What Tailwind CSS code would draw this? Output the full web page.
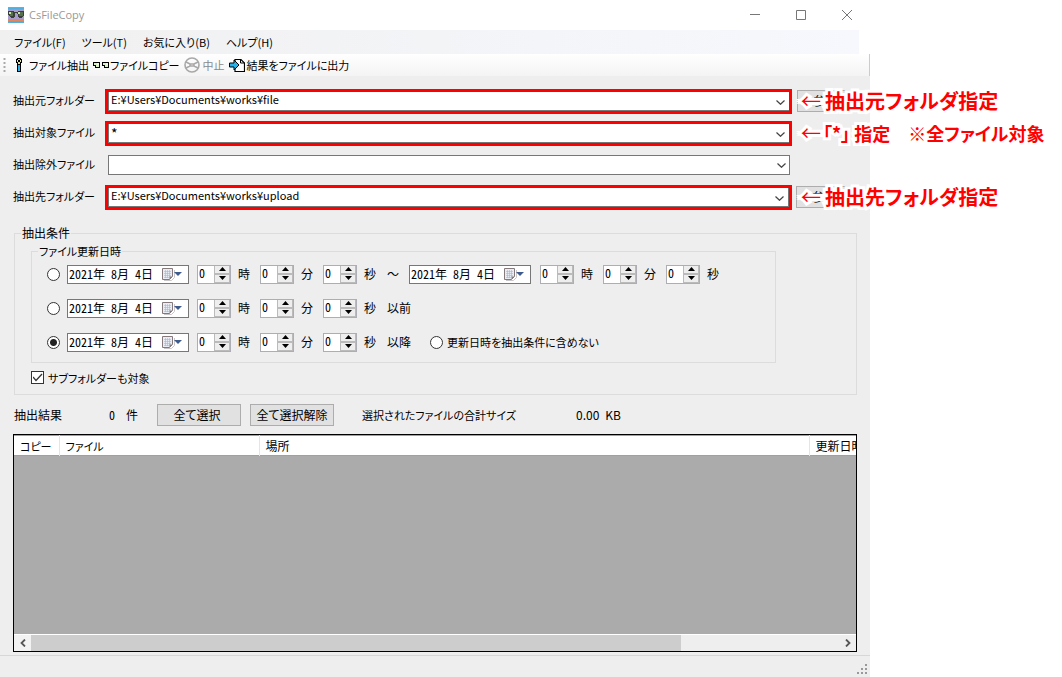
<!DOCTYPE html>
<html lang="ja">
<head>
<meta charset="utf-8">
<title>CsFileCopy</title>
<script src="https://cdn.jsdelivr.net/npm/@tailwindcss/browser@4"></script>
</head>
<body class="min-h-screen flex bg-white text-black text-xs leading-4 font-['Noto_Sans_CJK_JP',sans-serif] [font-feature-settings:'palt']">

<svg class="hidden" aria-hidden="true">
  <symbol id="chev" viewBox="0 0 9 5"><path d="M0.5 0.5L4.500 4.300L8.500 0.500" fill="none" stroke="#444" stroke-width="1.2"/></symbol>
  <symbol id="cal" viewBox="0 0 21 13">
    <path d="M2 12.500H9.500L12.500 9.500V2" fill="none" stroke="#c9c4c5" stroke-width="1"/>
    <path d="M0.500 0.500H10.500V8.500L7.500 11.500H0.500Z" fill="#e9edf5" stroke="#85797b"/>
    <path d="M2 3.500H9M2 5.500H9M2 7.500H9M2 9.500H7M3.500 2V10M5.500 2V10M7.500 2V9" stroke="#a9b3cc" stroke-width=".6"/>
    <path d="M7.500 11.500V8.500H10.500Z" fill="#85797b"/>
    <path d="M12 4H20L16 8Z" fill="#3f5a8c"/>
  </symbol>
  <symbol id="up" viewBox="0 0 7 4"><path d="M3.500 0L7 4H0Z" fill="#000"/></symbol>
  <symbol id="down" viewBox="0 0 7 4"><path d="M3.500 4L7 0H0Z" fill="#000"/></symbol>
</svg>

<div class="flex-1 min-w-0 mr-48 flex flex-col bg-[#eee]">
  <header class="h-[30px] flex items-center bg-white pl-2 pr-[18px]">
    <svg class="w-4 h-4" viewBox="0 0 16 16" shape-rendering="crispEdges">
      <path fill="#4fb0e0" d="M0 0h16v16H0z"/><path fill="#e08a5c" d="M0 0h16v1H0zM0 2h16v1H0zM0 12h16v2H0z"/><path fill="#a99bd0" d="M0 3h16v9H0z"/>
      <path fill="#3a3f3a" d="M0 4h6v1h4V4h6v5h-1v1h-1v1h-3v-1h-1V7H9V6H7v4H6v1H3v-1H2V9H1V8H0z"/><path fill="#c9e8a8" d="M1 5h2v2H1zM10 5h2v2h-2z"/><path fill="#55704f" d="M3 5h2v4H2V7h1zM12 5h3v4h-4V7h1z"/>
    </svg>
    <h1 class="ml-[5px] flex-1 text-[#999] font-['Open_Sans',sans-serif] text-[11px]">CsFileCopy</h1>
    <div class="flex gap-9 text-[#777]">
      <button aria-label="最小化"><svg class="w-[10px] h-[10px]" viewBox="0 0 10 10"><path d="M0 4.500H10" stroke="currentColor"/></svg></button>
      <button aria-label="最大化"><svg class="w-[10px] h-[10px]" viewBox="0 0 10 10"><path d="M.5.5H9.500V9.500H.5Z" fill="none" stroke="currentColor"/></svg></button>
      <button aria-label="閉じる"><svg class="w-[10px] h-[10px]" viewBox="0 0 10 10"><path d="M0 0L10 10M10 0L0 10" stroke="currentColor"/></svg></button>
    </div>
  </header>

  <div class="bg-white">
    <nav class="h-6 mr-[11px] pl-[14px] pb-px flex items-center gap-4 text-[11px] bg-linear-to-r from-[#f0f0f0] to-[#f6f8fd]">
      <button>ファイル(F)</button><button>ツール(T)</button><button>お気に入り(B)</button><button>ヘルプ(H)</button>
    </nav>
  </div>

  <div role="toolbar" class="h-[22px] flex items-center gap-1 pl-[3px] text-[11px] bg-linear-to-b from-white to-[#f4f4f4] border-r border-[#ccc]">
    <svg class="w-[3px] h-[14px]" viewBox="0 0 3 14"><path d="M1.500 0V14" stroke="#aaa" stroke-width="2" stroke-dasharray="2 2"/></svg>
    <button class="flex items-center ml-[5px]"><svg class="w-2 h-4 mr-[6px]" viewBox="0 0 8 16" shape-rendering="crispEdges"><path d="M2 1h4v1h1v4H6v9H2V6H1V2h1z"/><path fill="#dfe6a8" d="M3 2h2v1H3zM2 3h1v2H2zM5 3h1v2H5zM3 5h2v2H3z"/><path fill="#28b0e8" d="M3 8h2v6H3z"/></svg>ファイル抽出</button>
    <button class="flex items-center"><svg class="w-4 h-4 mr-px" viewBox="0 0 16 16" shape-rendering="crispEdges"><path d="M0 5h7v6H2V9H0zM9 5h7v6h-5V9H9z"/><path fill="#d9f2c4" d="M1 6h3v2H1zM3 8h3v2H3zM10 6h3v2h-3zM12 8h3v2h-3z"/><path fill="#eef8e4" d="M4 6h2v2H4zM13 6h2v2h-2z"/></svg>ファイルコピー</button>
    <button disabled class="flex items-center text-[#8a8a8a]"><svg class="w-4 h-4 mr-[3px]" viewBox="0 0 16 16" fill="none" stroke="#a8a8a8" stroke-width="1.600"><circle cx="8" cy="8" r="7"/><path d="M2 5L6 7H10L14 5M2 11L6 9H10L14 11M6 7V9M10 7V9"/></svg>中止</button>
    <button class="flex items-center"><svg class="w-4 h-4 mr-[2px]" viewBox="0 0 16 16"><path d="M6 4V2.500H12L15.500 6V14.500H6V12" fill="#fff" stroke="#000" stroke-width="1.200"/><path d="M11.500 2.500V6H15.500" fill="none" stroke="#000"/><path d="M.5 6H5V3L10 8L5 13V10H.5Z" fill="#28b0e8" stroke="#000"/></svg>結果をファイルに出力</button>
  </div>

  <main class="flex-1 flex flex-col px-[13px] pt-[9px] pb-[3px]">
    <div class="h-8 flex items-center relative">
      <label for="src" class="w-[92px] pb-[2px] text-[11px]">抽出元フォルダー</label>
      <div class="flex-1 mr-[5px] relative border-[3px] border-[#f00] h-[25px] flex">
        <select id="src" class="appearance-none w-full h-[19px] bg-white border-b border-l border-[#777] pl-[2px] pb-1 text-[11px] leading-[14px]"><option>E:¥Users¥Documents¥works¥file</option></select>
        <svg class="absolute right-1 top-[8px] w-[9px] h-[5px] pointer-events-none"><use href="#chev"/></svg>
      </div>
      <button class="w-[60px] h-[22px] pr-1 bg-[#e1e1e1] border border-[#adadad]">参照</button>
      <p class="absolute left-full -ml-[56px] flex items-center whitespace-nowrap text-[#f00] text-xl leading-6 font-bold [-webkit-text-stroke:6px_white] [paint-order:stroke]"><span class="w-6 font-normal">←</span>抽出元フォルダ指定</p>
    </div>
    <div class="h-8 flex items-center relative">
      <label for="inc" class="w-[92px] pb-[2px] text-[11px]">抽出対象ファイル</label>
      <div class="flex-1 mr-[65px] relative border-[3px] border-[#f00] h-[25px] flex">
        <select id="inc" class="appearance-none w-full h-[19px] bg-white border-b border-l border-[#777] pl-[2px] text-sm leading-[18px]"><option>*</option></select>
        <svg class="absolute right-1 top-[8px] w-[9px] h-[5px] pointer-events-none"><use href="#chev"/></svg>
      </div>
      <p class="absolute left-full -ml-[56px] flex items-center whitespace-nowrap text-[#f00] text-lg leading-6 font-bold [-webkit-text-stroke:6px_white] [paint-order:stroke]"><span class="w-[22px] text-xl font-normal">←</span>「*」 指定　※全ファイル対象</p>
    </div>
    <div class="h-8 flex items-center">
      <label for="exc" class="w-[92px] pb-[2px] text-[11px]">抽出除外ファイル</label>
      <div class="flex-1 ml-[3px] mr-[67px] relative flex">
        <select id="exc" class="appearance-none w-full h-5 bg-white border border-[#777] pl-[2px] text-[11px]"><option></option></select>
        <svg class="absolute right-1 top-[8px] w-[9px] h-[5px] pointer-events-none"><use href="#chev"/></svg>
      </div>
    </div>
    <div class="h-8 flex items-center relative">
      <label for="dst" class="w-[92px] pb-[2px] text-[11px]">抽出先フォルダー</label>
      <div class="flex-1 mr-1 relative border-[3px] border-[#f00] h-[25px] flex">
        <select id="dst" class="appearance-none w-full h-[19px] bg-white border-b border-x border-[#777] pl-[2px] pb-1 text-[11px] leading-[14px]"><option>E:¥Users¥Documents¥works¥upload</option></select>
        <svg class="absolute right-[5px] top-[8px] w-[9px] h-[5px] pointer-events-none"><use href="#chev"/></svg>
      </div>
      <button class="w-[60px] h-[22px] mr-px pr-1 bg-[#e1e1e1] border border-[#adadad]">参照</button>
      <p class="absolute left-full -ml-[56px] flex items-center whitespace-nowrap text-[#f00] text-xl leading-6 font-bold [-webkit-text-stroke:6px_white] [paint-order:stroke]"><span class="w-6 font-normal">←</span>抽出先フォルダ指定</p>
    </div>

    <fieldset class="mt-3 ml-px border border-[#dcdcdc] pl-4 pr-20 pb-[2px]">
      <legend class="-ml-[10px] px-px">抽出条件</legend>
      <fieldset class="mt-[2px] border border-[#dcdcdc] pl-[15px] pb-[5px] flex flex-col gap-1">
        <legend class="-ml-[9px] px-px text-[11px]">ファイル更新日時</legend>
        <div id="rowRange" class="h-[30px] flex items-center"></div>
        <div id="rowBefore" class="h-[30px] flex items-center"></div>
        <div id="rowAfter" class="h-[30px] flex items-center"></div>
      </fieldset>
      <div class="h-[29px] flex items-center">
        <input id="sub" type="checkbox" checked class="appearance-none w-[13px] h-[13px] border border-[#333] bg-white">
        <svg class="absolute ml-[2px] w-[10px] h-[9px] pointer-events-none" viewBox="0 0 10 9"><path d="M0 4L3 7.500L9 1" fill="none" stroke="#333" stroke-width="1.300"/></svg>
        <label for="sub" class="ml-1 text-[11px]">サブフォルダーも対象</label>
      </div>
    </fieldset>

    <div class="h-[39px] flex items-center pl-px">
      <span class="w-[95px]">抽出結果</span>
      <span class="w-[17px] [font-feature-settings:'hwid']">0</span>
      <span class="w-[31px]">件</span>
      <button class="w-[84px] h-[22px] mr-[9px] pr-1 bg-[#e1e1e1] border border-[#adadad]">全て選択</button>
      <button class="w-[84px] h-[22px] mr-7 bg-[#e1e1e1] border border-[#adadad]">全て選択解除</button>
      <span class="w-[214px] text-[11px]">選択されたファイルの合計サイズ</span>
      <span>0.00</span><span class="ml-[6px]">KB</span>
    </div>

    <div class="flex-1 flex flex-col border border-black bg-[#ababab] overflow-hidden">
      <div class="flex-1 overflow-hidden">
        <table class="table-fixed w-[996px] border-collapse bg-white">
          <thead><tr class="h-5 border-y border-[#a0a0a0] text-left whitespace-nowrap">
            <th class="w-[45px] pl-[6px] font-normal text-[11px] border-r border-r-[#e5e5e5]">コピー</th>
            <th class="w-[200px] pl-[6px] font-normal text-[11px] border-r border-r-[#e5e5e5]">ファイル</th>
            <th class="w-[550px] pl-[6px] font-normal border-r border-r-[#e5e5e5]">場所</th>
            <th class="pl-[6px] font-normal">更新日時</th>
          </tr></thead>
        </table>
      </div>
      <div class="h-[17px] flex bg-[#eee] border-t border-white">
        <button aria-label="左へ" class="w-[17px] flex items-center justify-center bg-[#f2f2f2]"><svg class="w-[6px] h-[8px]" viewBox="0 0 6 8"><path d="M5 .5L1.500 4L5 7.500" fill="none" stroke="#555" stroke-width="1.800"/></svg></button>
        <div class="flex-1 flex"><div class="bg-[#cdcdcd]" style="width:80.5%"></div></div>
        <button aria-label="右へ" class="w-[17px] flex items-center justify-center"><svg class="w-[6px] h-[8px]" viewBox="0 0 6 8"><path d="M1 .5L4.500 4L1 7.500" fill="none" stroke="#555" stroke-width="1.800"/></svg></button>
      </div>
    </div>
  </main>

  <footer class="h-[22px] border-t border-[#d7d7d7] flex items-end justify-end pb-[3px] pr-[3px]">
    <svg class="w-[10px] h-[10px]" viewBox="0 0 10 10" shape-rendering="crispEdges"><path fill="#999" d="M8 0h2v2H8zM4 4h2v2H4zM8 4h2v2H8zM0 8h2v2H0zM4 8h2v2H4zM8 8h2v2H8z"/></svg>
  </footer>
</div>

<template id="tDate">
  <div class="w-[122px] h-[19px] flex items-center bg-white border border-[#777] pl-px pr-[5px]">
    <input type="text" aria-label="日付" value="2021年 8月 4日" class="flex-1 min-w-0 outline-none [font-feature-settings:'hwid']">
    <button aria-label="カレンダー"><svg class="w-[21px] h-[13px]"><use href="#cal"/></svg></button>
  </div>
</template>
<template id="tSpin">
  <label class="w-[63px] flex items-center">
    <span class="w-[34px] h-[19px] flex bg-white border border-[#adadb5]">
      <input type="text" inputmode="numeric" value="0" class="flex-1 min-w-0 pl-px pb-[2px] outline-none [font-feature-settings:'hwid']">
      <span class="w-4 flex flex-col bg-[#eee]">
        <button aria-label="増やす" class="flex-1 flex items-center justify-center border border-t-0 border-[#bbb]"><svg class="w-[7px] h-[4px]"><use href="#up"/></svg></button>
        <button aria-label="減らす" class="flex-1 flex items-center justify-center border border-[#bbb]"><svg class="w-[7px] h-[4px]"><use href="#down"/></svg></button>
      </span>
    </span>
    <span class="unit pl-[7px]"></span>
  </label>
</template>
<template id="tRadio">
  <input type="radio" name="cond" class="appearance-none w-[13px] h-[13px] rounded-full border border-[#333] bg-white checked:bg-[radial-gradient(circle,#222_3px,white_4px)]">
</template>
<script>
  const get = id => document.getElementById(id);
  const add = (row, id) => { row.append(get(id).content.cloneNode(true)); return row.lastElementChild; };
  const text = (row, cls, s) => { const e = document.createElement('span'); e.className = cls; e.textContent = s; row.append(e); return e; };
  const radio = (row, label, on) => { const r = add(row, 'tRadio'); r.checked = on; r.setAttribute('aria-label', label); return r; };
  const moment = (row, gap) => {
    add(row, 'tDate').classList.add(gap);
    for (const u of ['時', '分', '秒']) add(row, 'tSpin').querySelector('.unit').textContent = u;
  };
  const rows = [['rowRange', '期間指定', false], ['rowBefore', '以前', false], ['rowAfter', '以降', true]];
  for (const [id, label, on] of rows) {
    const row = get(id);
    radio(row, label, on).classList.add('mr-[7px]');
    moment(row, 'mr-2');
    if (id === 'rowRange') { text(row, 'w-[23px] pl-px', '～'); moment(row, 'mr-[9px]'); }
    else text(row, 'pl-px', label);
    if (id === 'rowAfter') {
      const r = radio(row, '', false);
      r.removeAttribute('aria-label');
      r.id = 'noDate';
      r.classList.add('ml-[19px]');
      const l = document.createElement('label');
      l.htmlFor = 'noDate';
      l.className = 'ml-1 text-[11px]';
      l.textContent = '更新日時を抽出条件に含めない';
      row.append(l);
    }
  }
</script>
</body>
</html>
